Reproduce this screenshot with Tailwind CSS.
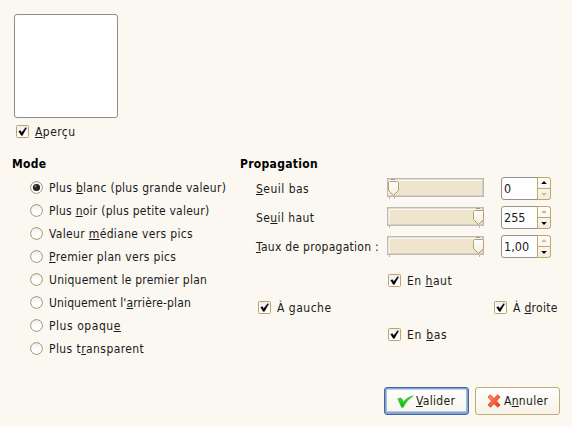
<!DOCTYPE html>
<html lang="fr">
<head>
<meta charset="utf-8">
<title>Propagation de valeur</title>
<script src="https://cdn.jsdelivr.net/npm/@tailwindcss/browser@4"></script>
</head>
<body class="w-[572px] h-[427px] overflow-hidden bg-[#fbf8f1] text-[#1a1a1a] text-[12px] leading-[15px] tracking-[0.3px] [text-decoration-skip-ink:none] font-['DejaVu_Sans_Condensed','DejaVu_Sans',sans-serif] font-stretch-condensed whitespace-nowrap">
<svg class="absolute size-0">
  <defs>
    <linearGradient id="g" x1="0" y1="0" x2="0" y2="1"><stop offset="0" stop-color="#fff"/><stop offset="1" stop-color="#f3ecdc"/></linearGradient>
    <linearGradient id="b" x1="0" y1="0" x2="0" y2="1"><stop offset="0" stop-color="#ececec"/><stop offset=".6" stop-color="#fff"/></linearGradient>
    <linearGradient id="gr" x1="0" y1="0" x2="0" y2="1"><stop offset="0" stop-color="#43dc3a"/><stop offset="1" stop-color="#06c006"/></linearGradient>
    <linearGradient id="rd" x1="0" y1="0" x2="1" y2="1"><stop offset="0" stop-color="#ff9a6a"/><stop offset="1" stop-color="#f0301a"/></linearGradient>
  </defs>
  <symbol id="check" viewBox="0 0 13 13">
    <rect x=".5" y=".5" width="12" height="12" rx="1" fill="url(#b)" stroke="#bda36a"/>
    <path d="M2.6 6.3 4.4 5.6 5.7 7.6 9.7 2.6 10.6 3 6.4 10.4H5.2Z" fill="#000" stroke="#000" stroke-width=".3"/>
  </symbol>
  <symbol id="radio" viewBox="0 0 13 13">
    <circle cx="6.5" cy="6.5" r="5.9" fill="url(#b)" stroke="#a4946c"/>
  </symbol>
  <symbol id="radio-on" viewBox="0 0 13 13">
    <circle cx="6.5" cy="6.5" r="5.9" fill="url(#b)" stroke="#a4946c"/>
    <circle cx="6.5" cy="6.5" r="3.6" fill="#222"/><circle cx="5.5" cy="5.3" r="1.1" fill="#888"/>
  </symbol>
  <symbol id="thumb" viewBox="0 0 11 15">
    <path d="M1.5.5H9.5L10.5 1.5V9.5L5.5 14.5.5 9.5V1.5Z" fill="url(#g)" stroke="#b99e60"/>
  </symbol>
</svg>
<main class="flex h-full flex-col">
  <section class="pl-[14px] pt-[14px]">
    <div class="h-[104px] w-[104px] rounded-[3px] border border-[#918e89] bg-white"></div>
    <label class="mt-[6px] ml-[2px] flex h-[15px] items-center gap-[6px]"><svg class="size-[13px]"><use href="#check"/></svg><span class="pt-[2px] tracking-[0.45px]"><u>A</u>perçu</span></label>
  </section>
  <div class="mt-[18px] flex h-[230px] pl-[12px]">
    <section class="w-[228px]">
      <h2 class="h-[15px] font-bold text-black">Mode</h2>
      <div class="mt-[4px] flex flex-col pl-[18px]">
        <label class="flex h-[23px] items-center gap-[6px]"><svg class="size-[13px]"><use href="#radio-on"/></svg><span class="pt-[2px]">Plus <u>b</u>lanc (plus grande valeur)</span></label>
        <label class="flex h-[23px] items-center gap-[6px]"><svg class="size-[13px]"><use href="#radio"/></svg><span class="pt-[2px] tracking-[0.25px]">Plus <u>n</u>oir (plus petite valeur)</span></label>
        <label class="flex h-[23px] items-center gap-[6px]"><svg class="size-[13px]"><use href="#radio"/></svg><span class="pt-[2px] tracking-[0.34px]">Valeur <u>m</u>édiane vers pics</span></label>
        <label class="flex h-[23px] items-center gap-[6px]"><svg class="size-[13px]"><use href="#radio"/></svg><span class="pt-[2px] tracking-[0.34px]"><u>P</u>remier plan vers pics</span></label>
        <label class="flex h-[23px] items-center gap-[6px]"><svg class="size-[13px]"><use href="#radio"/></svg><span class="pt-[2px] tracking-[0.24px]">Uniquement le premier plan</span></label>
        <label class="flex h-[23px] items-center gap-[6px]"><svg class="size-[13px]"><use href="#radio"/></svg><span class="pt-[2px] tracking-[0.13px]">Uniquement l'<u>a</u>rrière-plan</span></label>
        <label class="flex h-[23px] items-center gap-[6px]"><svg class="size-[13px]"><use href="#radio"/></svg><span class="pt-[2px] tracking-[0.55px]">Plus opaqu<u>e</u></span></label>
        <label class="flex h-[23px] items-center gap-[6px]"><svg class="size-[13px]"><use href="#radio"/></svg><span class="pt-[2px] tracking-[0.42px]">Plus t<u>r</u>ansparent</span></label>
      </div>
    </section>
    <section class="w-[332px]">
      <h2 class="h-[15px] font-bold text-black">Propagation</h2>
      <div class="mt-[2px] flex flex-col pl-[16px]">
        <div class="flex h-[29px] items-center">
          <span class="w-[131px] pt-[2px] tracking-[0.48px]"><u>S</u>euil bas</span>
          <svg class="h-[22px] w-[97px]" viewBox="0 0 97 22">
            <path d="M2.5 19V21M7.5 19V21" stroke="#bbb" fill="none"/>
            <rect x=".75" y=".75" width="95.5" height="17.5" fill="#efe4cd" stroke="#bcbab4" stroke-width="1.5"/><path d="M2 17.5V2.2H95" fill="none" stroke="#fff"/><path d="M4 1.5H8" stroke="#999"/>
            <use href="#thumb" x="1" y="3" width="11" height="15"/>
          </svg>
          <div class="ml-[17px] flex h-[23px] w-[50px] items-center rounded-[3px] border border-[#93908a] bg-white pl-[2px]"><span class="flex-1 text-[12.5px] tracking-normal">0</span>
            <svg class="-my-px -mr-px h-[23px] w-[14px] shrink-0" viewBox="0 0 14 23"><path d="M.5.5H11.5L13.5 2.5V20.5L11.5 22.5H.5ZM.5 11.5H13.5" fill="url(#g)" stroke="#c0a66d"/><path d="M7 4 9.8 7H4.2Z" fill="#000"/><path d="M7 19 4.2 16H9.8Z" fill="#cdba8c"/></svg>
          </div>
        </div>
        <div class="flex h-[29px] items-center">
          <span class="w-[131px] pt-[2px] tracking-[0.4px]">Se<u>u</u>il haut</span>
          <svg class="h-[22px] w-[97px]" viewBox="0 0 97 22">
            <path d="M2.5 19V21M92.5 19V21" stroke="#bbb" fill="none"/>
            <rect x=".75" y=".75" width="95.5" height="17.5" fill="#efe4cd" stroke="#bcbab4" stroke-width="1.5"/><path d="M2 17.5V2.2H95" fill="none" stroke="#fff"/><path d="M89 1.5H93" stroke="#999"/>
            <use href="#thumb" x="86" y="3" width="11" height="15"/>
          </svg>
          <div class="ml-[17px] flex h-[23px] w-[50px] items-center rounded-[3px] border border-[#93908a] bg-white pl-[2px]"><span class="flex-1 text-[12.5px] tracking-normal">255</span>
            <svg class="-my-px -mr-px h-[23px] w-[14px] shrink-0" viewBox="0 0 14 23"><path d="M.5.5H11.5L13.5 2.5V20.5L11.5 22.5H.5ZM.5 11.5H13.5" fill="url(#g)" stroke="#c0a66d"/><path d="M7 4 9.8 7H4.2Z" fill="#cdba8c"/><path d="M7 19 4.2 16H9.8Z" fill="#000"/></svg>
          </div>
        </div>
        <div class="flex h-[29px] items-center">
          <span class="w-[131px] pt-[2px] tracking-[0.28px]"><u>T</u>aux de propagation :</span>
          <svg class="h-[22px] w-[97px]" viewBox="0 0 97 22">
            <path d="M2.5 19V21M92.5 19V21" stroke="#bbb" fill="none"/>
            <rect x=".75" y=".75" width="95.5" height="17.5" fill="#efe4cd" stroke="#bcbab4" stroke-width="1.5"/><path d="M2 17.5V2.2H95" fill="none" stroke="#fff"/><path d="M89 1.5H93" stroke="#999"/>
            <use href="#thumb" x="86" y="3" width="11" height="15"/>
          </svg>
          <div class="ml-[17px] flex h-[23px] w-[50px] items-center rounded-[3px] border border-[#93908a] bg-white pl-[2px]"><span class="flex-1 text-[12.5px] tracking-normal">1,00</span>
            <svg class="-my-px -mr-px h-[23px] w-[14px] shrink-0" viewBox="0 0 14 23"><path d="M.5.5H11.5L13.5 2.5V20.5L11.5 22.5H.5ZM.5 11.5H13.5" fill="url(#g)" stroke="#c0a66d"/><path d="M7 4 9.8 7H4.2Z" fill="#cdba8c"/><path d="M7 19 4.2 16H9.8Z" fill="#000"/></svg>
          </div>
        </div>
      </div>
      <div class="mt-[6px] grid grid-cols-[130px_106px_78px] grid-rows-[27px_27px_27px] items-center pl-[18px]">
        <label class="col-start-2 flex h-[15px] items-center gap-[6px]"><svg class="size-[13px]"><use href="#check"/></svg><span class="pt-[2px] tracking-[0.5px]">En <u>h</u>aut</span></label>
        <label class="col-start-1 row-start-2 flex h-[15px] items-center gap-[6px]"><svg class="size-[13px]"><use href="#check"/></svg><span class="pt-[2px] tracking-[0.5px]">À gauche</span></label>
        <label class="col-start-3 row-start-2 flex h-[15px] items-center gap-[6px]"><svg class="size-[13px]"><use href="#check"/></svg><span class="pt-[2px]">À <u>d</u>roite</span></label>
        <label class="col-start-2 row-start-3 flex h-[15px] items-center gap-[6px]"><svg class="size-[13px]"><use href="#check"/></svg><span class="pt-[2px] tracking-[0.7px]">En <u>b</u>as</span></label>
      </div>
    </section>
  </div>
  <footer class="flex gap-[6px] pl-[384px]">
    <button class="flex h-[28px] w-[85px] items-center rounded-[3px] border border-[#48659b] bg-linear-to-b from-white to-[#f8f4ea] pl-[12px] tracking-[0.3px] shadow-[inset_0_0_0_1.5px_#82a3d9,inset_0_-1px_0_1.5px_#82a3d9]">
      <svg class="mr-[2px] h-[13px] w-[17px]" viewBox="0 0 17 13"><path d="M.8 3.8 4.2 3 6.5 6.8Q10.5 2 16.3.8 9.5 5.2 6.2 12.3H4.6Z" fill="url(#gr)" stroke="#14a014" stroke-width=".5"/></svg><span><u>V</u>alider</span>
    </button>
    <button class="flex h-[28px] w-[85px] items-center rounded-[3px] border border-[#c0aa76] bg-linear-to-b from-white to-[#f7f2e6] pl-[11px] tracking-[0.3px]">
      <svg class="mr-[3px] size-[14px]" viewBox="0 0 14 14"><path d="M1 3 3.4.8 7 4.5 10.5.8 13 3 9.5 7 13 11 10.8 13.2 7 9.7 3.4 13.2 1 11 4.5 7Z" fill="url(#rd)" stroke="#dc4428" stroke-width=".8"/></svg><span>A<u>n</u>nuler</span>
    </button>
  </footer>
</main>
</body>
</html>
